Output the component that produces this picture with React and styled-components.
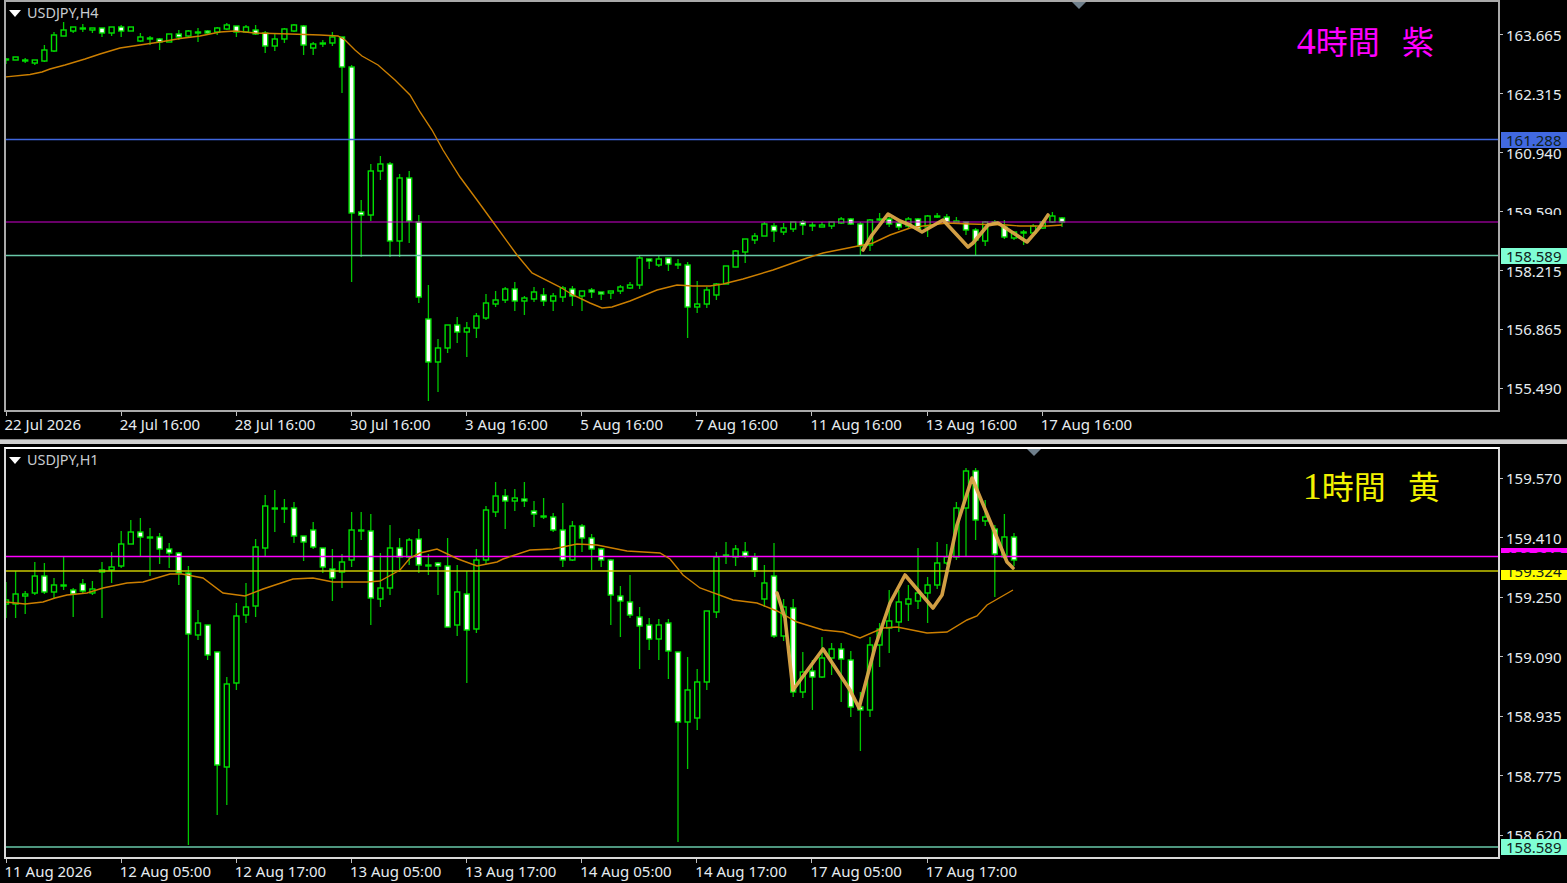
import React from "react";
import styled, { createGlobalStyle } from "styled-components";

const GlobalStyle = createGlobalStyle`
  html, body {
    margin: 0;
    padding: 0;
    background: #000;
  }
`;

const STEP = 9.6;
const FIRST_X = 6;

// [wickTop, bodyTop, bodyBottom, wickBottom, white]
const H4_CANDLES = [
  [58, 59, 60, 64, 0], [57, 57, 60, 60, 0], [58, 60, 61, 63, 1], [60, 60, 63, 65, 0],
  [45, 50, 61, 62, 0], [32, 35, 51, 52, 0], [22, 30, 36, 36, 0], [27, 27, 31, 33, 0],
  [24, 28, 29, 32, 1], [28, 28, 30, 33, 0], [28, 28, 33, 37, 1], [27, 27, 33, 36, 0],
  [25, 27, 31, 37, 1], [27, 27, 31, 31, 0], [33, 37, 41, 42, 0], [36, 38, 39, 45, 1],
  [38, 39, 42, 50, 1], [34, 34, 42, 42, 0], [30, 34, 37, 40, 1], [30, 31, 36, 38, 0],
  [28, 32, 33, 42, 1], [30, 31, 33, 35, 1], [27, 28, 32, 35, 0], [23, 25, 29, 30, 0],
  [26, 26, 32, 37, 1], [25, 27, 32, 33, 0], [25, 30, 34, 35, 1], [31, 33, 46, 53, 1],
  [33, 39, 46, 51, 0], [28, 29, 39, 43, 0], [24, 25, 31, 32, 0], [25, 26, 45, 55, 1],
  [42, 44, 48, 55, 0], [40, 43, 44, 47, 1], [32, 37, 43, 46, 0], [37, 37, 67, 93, 1],
  [65, 67, 213, 282, 1], [200, 212, 215, 257, 1], [164, 171, 215, 221, 0], [156, 164, 171, 180, 0],
  [162, 164, 241, 257, 1], [174, 178, 241, 257, 0], [171, 178, 221, 243, 1], [215, 222, 297, 303, 1],
  [285, 319, 362, 401, 1], [339, 348, 362, 392, 0], [325, 325, 348, 353, 0], [317, 325, 332, 343, 1],
  [322, 328, 332, 357, 0], [313, 316, 328, 338, 0], [294, 303, 318, 320, 0], [291, 300, 304, 307, 0],
  [287, 289, 300, 303, 0], [282, 289, 301, 311, 1], [296, 298, 301, 315, 0], [287, 292, 299, 302, 0],
  [288, 295, 301, 306, 1], [293, 296, 301, 311, 0], [286, 288, 297, 302, 0], [286, 289, 296, 306, 1],
  [291, 291, 296, 311, 0], [288, 290, 292, 298, 1], [292, 292, 294, 300, 1], [291, 291, 293, 299, 0],
  [285, 287, 291, 294, 0], [282, 285, 288, 289, 0], [256, 258, 285, 289, 0], [259, 259, 261, 269, 1],
  [256, 259, 265, 267, 0], [258, 258, 264, 271, 1], [259, 264, 265, 269, 1], [262, 265, 307, 338, 1],
  [281, 304, 307, 313, 0], [287, 290, 304, 308, 0], [283, 284, 295, 300, 0], [266, 266, 284, 284, 0],
  [250, 251, 267, 267, 0], [239, 239, 252, 263, 0], [233, 236, 240, 244, 0], [222, 224, 236, 236, 0],
  [223, 226, 231, 242, 1], [223, 228, 232, 235, 0], [222, 222, 229, 232, 0], [220, 222, 225, 235, 1],
  [222, 225, 226, 231, 1], [222, 225, 227, 227, 0], [222, 222, 226, 229, 0], [217, 219, 223, 224, 0],
  [218, 219, 224, 225, 1], [222, 224, 246, 255, 1], [219, 220, 245, 251, 0], [213, 219, 220, 221, 1],
  [216, 219, 224, 227, 1], [222, 223, 227, 230, 1], [217, 219, 226, 228, 0], [218, 219, 229, 230, 1],
  [215, 216, 227, 237, 0], [213, 216, 217, 218, 1], [214, 217, 222, 225, 1], [217, 221, 223, 223, 0],
  [222, 222, 230, 235, 1], [228, 230, 240, 255, 1], [221, 222, 241, 246, 0], [220, 222, 223, 225, 0],
  [220, 227, 237, 239, 1], [232, 232, 238, 240, 0], [230, 232, 233, 245, 1], [224, 226, 233, 233, 0],
  [220, 222, 228, 229, 0], [212, 216, 222, 223, 0], [217, 218, 222, 227, 1],
];

const H1_CANDLES = [
  [582, 600, 604, 618, 0], [571, 594, 604, 618, 0], [591, 594, 596, 614, 0], [562, 576, 593, 595, 0],
  [563, 576, 592, 594, 1], [578, 585, 592, 599, 0], [557, 585, 586, 590, 1], [588, 590, 594, 617, 1],
  [579, 584, 591, 593, 1], [581, 589, 593, 595, 0], [562, 570, 572, 618, 0], [552, 567, 570, 583, 0],
  [531, 544, 566, 568, 0], [520, 532, 544, 544, 0], [518, 532, 537, 556, 1], [528, 537, 538, 576, 1],
  [533, 537, 549, 564, 1], [543, 549, 553, 568, 1], [552, 553, 573, 585, 1], [566, 573, 634, 845, 1],
  [610, 623, 635, 640, 0], [625, 625, 655, 660, 1], [652, 652, 765, 815, 1], [677, 684, 767, 805, 0],
  [603, 616, 683, 690, 0], [583, 607, 615, 623, 0], [539, 547, 606, 617, 0], [495, 506, 548, 557, 0],
  [490, 508, 509, 532, 1], [499, 508, 509, 523, 1], [502, 508, 536, 543, 1], [536, 536, 542, 561, 1],
  [522, 530, 547, 549, 1], [548, 548, 567, 573, 1], [549, 569, 578, 601, 1], [554, 562, 572, 588, 0],
  [512, 530, 560, 567, 0], [512, 530, 531, 540, 1], [514, 531, 598, 625, 1], [553, 588, 599, 607, 0],
  [525, 548, 588, 595, 0], [538, 548, 557, 572, 1], [538, 540, 557, 565, 0], [529, 539, 565, 573, 1],
  [554, 565, 566, 575, 1], [562, 563, 566, 595, 1], [538, 566, 627, 627, 1], [565, 592, 625, 636, 0],
  [571, 594, 630, 683, 1], [549, 560, 629, 633, 0], [506, 510, 560, 564, 0], [482, 496, 512, 517, 0],
  [489, 496, 501, 529, 1], [489, 498, 501, 511, 0], [482, 499, 501, 507, 1], [501, 511, 514, 527, 1],
  [498, 516, 517, 519, 1], [513, 517, 530, 532, 1], [503, 530, 560, 567, 1], [521, 526, 560, 561, 0],
  [524, 526, 538, 552, 1], [534, 538, 549, 570, 1], [548, 549, 560, 567, 1], [559, 560, 595, 625, 1],
  [586, 596, 601, 637, 1], [575, 602, 615, 618, 1], [607, 617, 626, 669, 1], [618, 625, 639, 650, 1],
  [619, 625, 639, 660, 0], [619, 623, 651, 679, 1], [652, 652, 722, 842, 1], [657, 690, 722, 769, 0],
  [669, 682, 718, 730, 0], [611, 611, 682, 690, 0], [552, 557, 612, 618, 0], [542, 555, 556, 564, 1],
  [545, 549, 557, 566, 0], [542, 552, 556, 558, 1], [553, 557, 571, 577, 1], [565, 583, 599, 607, 0],
  [543, 576, 636, 638, 1], [599, 607, 636, 641, 0], [599, 608, 692, 697, 1], [652, 672, 692, 698, 0],
  [660, 671, 677, 710, 1], [637, 658, 677, 678, 0], [643, 649, 658, 675, 0], [643, 649, 659, 702, 1],
  [651, 660, 707, 717, 1], [692, 707, 710, 751, 1], [637, 645, 710, 717, 0], [623, 629, 645, 667, 0],
  [590, 621, 628, 653, 0], [590, 602, 622, 632, 0], [585, 599, 604, 621, 0], [548, 593, 601, 609, 0],
  [577, 585, 593, 623, 0], [542, 563, 585, 589, 0], [544, 557, 563, 565, 0], [502, 508, 557, 560, 0],
  [468, 471, 508, 557, 0], [468, 471, 520, 540, 1], [500, 517, 521, 526, 0], [525, 529, 554, 597, 1],
  [514, 537, 557, 559, 0], [533, 537, 560, 566, 1],
];

const H4_AVERAGE = [
  [5, 77], [30, 74.5], [42, 72], [50, 69], [65, 65], [85, 59], [100, 54], [120, 48], [140, 45],
  [160, 42], [180, 38.5], [200, 36], [220, 32], [235, 31], [255, 33], [290, 34], [320, 35],
  [338, 36], [345, 40], [355, 50], [362, 56], [378, 65], [395, 80], [410, 95], [420, 112],
  [432, 130], [443, 150], [460, 177], [477, 200], [493, 222], [517, 255], [532, 273], [560, 287],
  [573, 295], [590, 303], [602, 308], [612, 307], [630, 301], [657, 290], [677, 285], [693, 286],
  [710, 286], [723, 284], [743, 279], [773, 270], [807, 258], [823, 253], [853, 247], [873, 243],
  [890, 235], [910, 228], [923, 226], [947, 223], [970, 224], [1007, 225], [1020, 226], [1047, 226],
  [1062, 225],
];

const H4_ZIGZAG = [
  [863, 250], [872, 235], [888, 214], [900, 221], [910, 225], [922, 232], [943, 220], [957, 235],
  [968, 247], [973, 243], [988, 225], [998, 223], [1027, 242], [1040, 227], [1048, 215],
];

const H1_AVERAGE = [
  [6, 602], [25, 604], [43, 602], [55, 598], [67, 595], [87, 593], [103, 588], [127, 583], [143, 582],
  [170, 574], [182, 574], [203, 578], [223, 593], [245, 596], [263, 589], [293, 579], [313, 578],
  [333, 582], [367, 582], [380, 581], [400, 570], [410, 558], [420, 553], [437, 549], [458, 559],
  [477, 566], [497, 562], [503, 559], [530, 550], [553, 549], [577, 544], [597, 545], [627, 551],
  [660, 553], [670, 559], [683, 575], [700, 588], [733, 600], [757, 603], [777, 611], [797, 622],
  [823, 630], [843, 632], [860, 638], [883, 628], [897, 627], [927, 633], [947, 632], [967, 620],
  [977, 616], [987, 605], [1013, 590],
];

const H1_ZIGZAG = [
  [777, 593], [785, 618], [793, 690], [823, 649], [850, 690], [859, 708], [875, 647], [890, 603],
  [905, 575], [933, 608], [942, 595], [957, 525], [972, 478], [995, 533], [1007, 562], [1013, 568],
];

const H4_TIMES = [
  "22 Jul 2026", "24 Jul 16:00", "28 Jul 16:00", "30 Jul 16:00", "3 Aug 16:00",
  "5 Aug 16:00", "7 Aug 16:00", "11 Aug 16:00", "13 Aug 16:00", "17 Aug 16:00",
];

const H1_TIMES = [
  "11 Aug 2026", "12 Aug 05:00", "12 Aug 17:00", "13 Aug 05:00", "13 Aug 17:00",
  "14 Aug 05:00", "14 Aug 17:00", "17 Aug 05:00", "17 Aug 17:00",
];

const H4_PRICES = ["163.665", "162.315", "160.940", "159.590", "158.215", "156.865", "155.490"];
const H1_PRICES = ["159.570", "159.410", "159.250", "159.090", "158.935", "158.775", "158.620"];

const Page = styled.div`
  width: 1567px;
  height: 883px;
  overflow: hidden;
  background: #000;
  font-family: "Noto Sans", "Liberation Sans", sans-serif;
`;

const ChartWindow = styled.section`
  height: ${props => props.$height}px;
`;

const ChartBody = styled.div`
  display: flex;
  height: 412px;
`;

const Plot = styled.div`
  position: relative;
  box-sizing: border-box;
  width: 1496px;
  margin-left: 4px;
  border: 2px solid ${props => (props.$active ? "#d8d8d8" : "#a9a9a9")};
  border-top-color: ${props => (props.$active ? "#fff" : "#a9a9a9")};
  overflow: hidden;
`;

const ChartSvg = styled.svg`
  display: block;
  width: 1492px;
  height: 408px;
`;

const Wick = styled.line`
  stroke: #00c800;
  stroke-width: 1.3;
`;

const Body = styled.rect`
  stroke: #00e000;
  stroke-width: 1.4;
  fill: ${props => (props.$white ? "#fff" : "#000")};
`;

const Level = styled.line`
  stroke: ${props => props.$color};
  stroke-width: ${props => props.$weight || 1};
`;

const Average = styled.polyline`
  fill: none;
  stroke: #cc7f00;
  stroke-width: 1.4;
`;

const Zigzag = styled.polyline`
  fill: none;
  stroke: #dfa848;
  stroke-width: 3.6;
  stroke-linejoin: round;
  stroke-linecap: round;
  opacity: 0.94;
  filter: blur(0.4px);
`;

const SymbolLabel = styled.div`
  position: absolute;
  top: 2px;
  left: 3px;
  display: flex;
  align-items: center;
  gap: 6px;
  font-size: 14.4px;
  line-height: 18px;
  color: #c8ccd0;

  &::before {
    content: "";
    border-left: 6px solid transparent;
    border-right: 6px solid transparent;
    border-top: 7px solid #fff;
  }
`;

const Watermark = styled.div`
  position: absolute;
  top: ${props => props.$top}px;
  right: ${props => props.$right}px;
  font-family: "Noto Sans CJK JP", sans-serif;
  font-size: 32px;
  line-height: 38px;
  white-space: pre;
  word-spacing: 4px;
  color: ${props => props.$color};
`;

const WatermarkDigit = styled.span`
  font-family: "Liberation Serif", serif;
  font-size: 38px;
`;

const ShiftMark = styled.div`
  position: absolute;
  top: 0;
  left: ${props => props.$left}px;
  border-left: 7px solid transparent;
  border-right: 7px solid transparent;
  border-top: 7px solid #6f7f8b;
`;

const PriceScale = styled.div`
  position: relative;
  flex: 1;
  padding-top: ${props => props.$offset}px;
  overflow: hidden;
`;

const PriceRow = styled.div`
  display: flex;
  align-items: center;
  gap: 3px;
  height: ${props => props.$step}px;
  font-size: 15px;
  color: #e6ecf0;

  &::before {
    content: "";
    width: 3px;
    height: 1px;
    background: #c0c0c0;
  }
`;

const PriceTag = styled.div`
  position: absolute;
  top: ${props => props.$top}px;
  left: 1px;
  right: 0;
  height: ${props => props.$height}px;
  display: flex;
  align-items: ${props => props.$align || "center"};
  padding-left: 5px;
  overflow: hidden;
  font-size: 15px;
  line-height: 17px;
  color: #10221c;
  background: ${props => props.$color};
`;

const TimeScale = styled.div`
  display: flex;
  padding-left: 4.5px;
`;

const TimeLabel = styled.div`
  flex: 0 0 115.15px;
  font-size: 15px;
  line-height: 16px;
  white-space: nowrap;
  color: #e6ecf0;

  &::before {
    content: "";
    display: block;
    width: 1px;
    height: 4px;
    margin-left: 1px;
    background: #c0c0c0;
  }
`;

const Splitter = styled.div`
  height: 5px;
  margin-bottom: 3px;
  background: #cfcfcf;
  border-top: 1px solid #8c8c8c;
  box-sizing: border-box;
`;

const toPoints = points => points.map(p => p.join(",")).join(" ");

const Candles = ({ data }) =>
  data.map(([wickTop, bodyTop, bodyBottom, wickBottom, white], i) => {
    const x = FIRST_X + STEP * i;
    return (
      <g key={i}>
        <Wick x1={x} x2={x} y1={wickTop} y2={wickBottom} />
        <Body
          $white={white}
          x={x - 2.5}
          y={bodyTop}
          width={5}
          height={Math.max(bodyBottom - bodyTop, 1)}
        />
      </g>
    );
  });

const Chart = ({ viewBox, candles, levels, average, zigzag }) => (
  <ChartSvg viewBox={viewBox}>
    <Candles data={candles} />
    {levels.map(level => (
      <Level
        key={level.y}
        x1={0}
        x2={1500}
        y1={level.y}
        y2={level.y}
        $color={level.color}
        $weight={level.weight}
      />
    ))}
    <Average points={toPoints(average)} />
    <Zigzag points={toPoints(zigzag)} />
  </ChartSvg>
);

const H4_LEVELS = [
  { y: 139.5, color: "#3f66dd", weight: 1.5 },
  { y: 222, color: "#d000d0", weight: 1.1 },
  { y: 255.5, color: "#68c8a8", weight: 1.6 },
];

const H1_LEVELS = [
  { y: 556.5, color: "#ff00ff", weight: 1.4 },
  { y: 571, color: "#c8c800", weight: 1.4 },
  { y: 847, color: "#68c8a8", weight: 1.4 },
];

const App = () => (
  <Page>
    <GlobalStyle />
    <ChartWindow $height={439}>
      <ChartBody>
        <Plot>
          <Chart
            viewBox="6 2 1492 408"
            candles={H4_CANDLES}
            levels={H4_LEVELS}
            average={H4_AVERAGE}
            zigzag={H4_ZIGZAG}
          />
          <SymbolLabel>USDJPY,H4</SymbolLabel>
          <Watermark $top={19} $right={64} $color="#ff00ff">
            <WatermarkDigit>4</WatermarkDigit>{"時間  紫"}
          </Watermark>
          <ShiftMark $left={1066} />
        </Plot>
        <PriceScale $offset={5.5}>
          {H4_PRICES.map(price => (
            <PriceRow key={price} $step={58.9}>{price}</PriceRow>
          ))}
          <PriceTag $top={132} $height={16} $color="#4169e1">161.288</PriceTag>
          <PriceTag $top={215} $height={14} $color="#000" />
          <PriceTag $top={248} $height={16} $color="#7fffd4">158.589</PriceTag>
        </PriceScale>
      </ChartBody>
      <TimeScale>
        {H4_TIMES.map(time => <TimeLabel key={time}>{time}</TimeLabel>)}
      </TimeScale>
    </ChartWindow>
    <Splitter />
    <ChartWindow $height={436}>
      <ChartBody>
        <Plot $active>
          <Chart
            viewBox="6 449 1492 408"
            candles={H1_CANDLES}
            levels={H1_LEVELS}
            average={H1_AVERAGE}
            zigzag={H1_ZIGZAG}
          />
          <SymbolLabel>USDJPY,H1</SymbolLabel>
          <Watermark $top={17} $right={58} $color="#f2f200">
            <WatermarkDigit>1</WatermarkDigit>{"時間  黄"}
          </Watermark>
          <ShiftMark $left={1021} />
        </Plot>
        <PriceScale $offset={1.5}>
          {H1_PRICES.map(price => (
            <PriceRow key={price} $step={59.5}>{price}</PriceRow>
          ))}
          <PriceTag $top={101} $height={5} $align="flex-start" $color="#ff00ff">159.357</PriceTag>
          <PriceTag $top={123} $height={10} $align="flex-end" $color="#ffff00">159.324</PriceTag>
          <PriceTag $top={392} $height={16} $color="#7fffd4">158.589</PriceTag>
        </PriceScale>
      </ChartBody>
      <TimeScale>
        {H1_TIMES.map(time => <TimeLabel key={time}>{time}</TimeLabel>)}
      </TimeScale>
    </ChartWindow>
  </Page>
);

export default App;
